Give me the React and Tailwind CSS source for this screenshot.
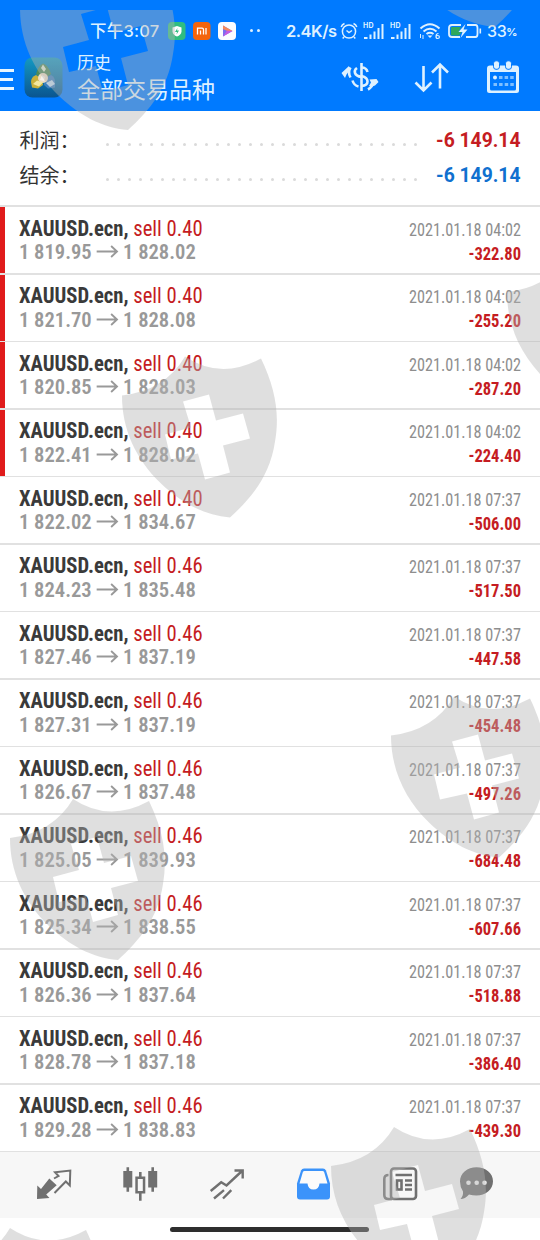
import React from "react";

const deals = [
  { lot: "0.40", open: "1 819.95", close: "1 828.02", time: "2021.01.18 04:02", profit: "-322.80", stop: true },
  { lot: "0.40", open: "1 821.70", close: "1 828.08", time: "2021.01.18 04:02", profit: "-255.20", stop: true },
  { lot: "0.40", open: "1 820.85", close: "1 828.03", time: "2021.01.18 04:02", profit: "-287.20", stop: true },
  { lot: "0.40", open: "1 822.41", close: "1 828.02", time: "2021.01.18 04:02", profit: "-224.40", stop: true },
  { lot: "0.40", open: "1 822.02", close: "1 834.67", time: "2021.01.18 07:37", profit: "-506.00" },
  { lot: "0.46", open: "1 824.23", close: "1 835.48", time: "2021.01.18 07:37", profit: "-517.50" },
  { lot: "0.46", open: "1 827.46", close: "1 837.19", time: "2021.01.18 07:37", profit: "-447.58" },
  { lot: "0.46", open: "1 827.31", close: "1 837.19", time: "2021.01.18 07:37", profit: "-454.48" },
  { lot: "0.46", open: "1 826.67", close: "1 837.48", time: "2021.01.18 07:37", profit: "-497.26" },
  { lot: "0.46", open: "1 825.05", close: "1 839.93", time: "2021.01.18 07:37", profit: "-684.48" },
  { lot: "0.46", open: "1 825.34", close: "1 838.55", time: "2021.01.18 07:37", profit: "-607.66" },
  { lot: "0.46", open: "1 826.36", close: "1 837.64", time: "2021.01.18 07:37", profit: "-518.88" },
  { lot: "0.46", open: "1 828.78", close: "1 837.18", time: "2021.01.18 07:37", profit: "-386.40" },
  { lot: "0.46", open: "1 829.28", close: "1 838.83", time: "2021.01.18 07:37", profit: "-439.30" },
];

const Signal = () => (
  <div className="relative h-[18px] w-[22px]">
    <span className="absolute top-0 left-0 text-[7px] leading-[8px] font-bold tracking-wide">HD</span>
    <svg viewBox="0 0 22 18" className="absolute inset-0" stroke="currentColor" strokeWidth="2">
      <path d="M1 16h3.500M7.500 17v-4.500M11.500 17V9.500M15.500 17V6M19.500 17V2" />
    </svg>
  </div>
);

const StatusBar = () => (
  <div className="flex h-[52px] items-center pt-[9px] text-[#def1ff] font-['Inter','Noto_Sans_CJK_SC',sans-serif] text-[16.500px] font-medium whitespace-nowrap">
    <span className="ml-[90px] w-[78px] pt-px tracking-[0.2px]">下午3:07</span>
    <svg width="18" height="18" viewBox="0 0 18 18">
      <rect width="17.500" height="18" rx="4" fill="#2fbd80" />
      <path d="M9 4l4.500 1.500v4c0 2.500-2 4-4.500 5-2.500-1-4.500-2.500-4.500-5v-4z" fill="#fff" />
      <path d="M9.500 6l-2.500 4h2l-.5 2.500 2.500-4H9z" fill="#2fbd80" />
    </svg>
    <svg className="ml-[7px]" width="18" height="18" viewBox="0 0 18 18">
      <rect width="17.500" height="18" rx="4" fill="#f4640c" />
      <path d="M4.500 12.500V6.200H9q1.500 0 1.500 1.500v4.800M7.500 8.500v4M13 6v6.500" fill="none" stroke="#fff" strokeWidth="1.300" />
    </svg>
    <svg className="ml-[7px]" width="18" height="18" viewBox="0 0 18 18">
      <rect width="18" height="18" rx="4" fill="#fafcff" />
      <path d="M5 3.500v11L14.500 9z" fill="#7b6cf0" />
      <path d="M5 3.500l9.500 5.500-4 .500L5 7z" fill="#f58a5a" />
      <path d="M5 14.500L14.500 9 9 8.500z" fill="#c45be0" />
    </svg>
    <div className="ml-[14px] flex w-[36px] gap-[4px]">
      <i className="size-[3px] rounded-full bg-[#def1ff]" />
      <i className="size-[3px] rounded-full bg-[#def1ff]" />
    </div>
    <span className="w-[54px] pt-px font-semibold tracking-[-0.5px]">2.4K/s</span>
    <svg width="18" height="18" viewBox="0 0 18 18" fill="none" stroke="currentColor" strokeWidth="1.500">
      <circle cx="9" cy="9.500" r="6.600" />
      <path d="M6.500 8.500L9 10.500l3-2M1.200 5Q2 2.500 4.500 1.500M16.800 5Q16 2.500 13.500 1.500M4 15l-1.300 1.500M14 15l1.300 1.500" />
    </svg>
    <div className="ml-[5px] flex gap-[5px]">
      <Signal />
      <Signal />
    </div>
    <svg className="ml-[7px]" width="22" height="18" viewBox="0 0 22 18" fill="none" stroke="currentColor" strokeWidth="2">
      <path d="M1.500 6.500Q11-2 20.500 6.500M4.500 9.500Q11 4 17.500 9.500M7.500 12Q11 9.500 14.500 12" />
      <path d="M8.500 13.500L11 16l2.500-2.500z" fill="currentColor" stroke="none" />
      <path d="M1.500 12v4M4 13v4" strokeWidth="1" />
      <path d="M19.500 11.500q-2.500 0-2.500 3 0 2 1.700 2t1.700-1.500-1.700-1.500-1.700 1.200" strokeWidth="1.200" />
    </svg>
    <svg className="ml-[7px]" width="34" height="18" viewBox="0 0 34 18" fill="none">
      <path d="M13 3h-9Q1 3 1 6v6q0 3 3 3h8M19 3h8.500q2 0 2 3v6q0 3-2 3H18" stroke="currentColor" strokeWidth="1.800" />
      <path d="M4 5h9l-2.500 5h3L11 13.500H4q-1 0-1-1V6q0-1 1-1z" fill="#2fa85c" />
      <path d="M17.500 2l-7 8h4l-2 6 7-8.500h-4z" fill="currentColor" />
      <path d="M32.300 6.500v5" stroke="currentColor" strokeWidth="1.600" />
    </svg>
    <span className="ml-[5px] pt-px text-[16px] tracking-[-0.4px]">33</span>
    <span className="pt-[4px] text-[11px] font-bold">%</span>
  </div>
);

const AppIcon = () => (
  <svg className="ml-[10px] shrink-0" width="40" height="42" viewBox="0 0 40 42">
    <defs>
      <linearGradient id="app" x1="0" y1="0" x2="0" y2="1">
        <stop offset="0" stopColor="#1499c2" />
        <stop offset="1" stopColor="#0a5590" />
      </linearGradient>
    </defs>
    <rect x=".5" y=".5" width="38" height="40" rx="8" fill="url(#app)" />
    <path d="M12 17Q14 9 19 6.500 25 9 27 17l-4 3h-8z" fill="#4f8a58" />
    <path d="M17 11l2-3.500 3 4.500-2 3z" fill="#dfe9d0" />
    <path d="M7 25q0-5 5-7l6 4 1 6-5 3.500-6-1z" fill="#c9b13c" />
    <path d="M31 25q0-5-4-7l-7 4v6l4 3.500 7-1z" fill="#3f80bd" />
    <circle cx="19" cy="21" r="5" fill="#ecdcc4" />
    <path d="M9 27l6 2.500 4-4-6-2z" fill="#f4e9a0" />
    <path d="M22 26l4 4 5-3-3-4z" fill="#c3dcef" />
    <path d="M18 18l3 2-1 4-4-1z" fill="#f5f1ea" />
  </svg>
);

const Header = () => (
  <header className="h-[111px] bg-[#007aff] text-[#def1ff]">
    <StatusBar />
    <div className="flex h-[59px] items-start">
      <div className="mt-[17px] flex w-[14px] shrink-0 flex-col gap-[6px] *:h-[3px] *:bg-[#e8f6ff]">
        <i />
        <i className="w-[13px]" />
        <i />
      </div>
      <div className="mt-[5px]"><AppIcon /></div>
      <div className="ml-[13px] w-[264px] font-['Noto_Sans_CJK_SC',sans-serif] whitespace-nowrap">
        <div className="text-[17px] leading-[20px]">历史</div>
        <div className="mt-[2px] text-[23px] leading-[28px]">全部交易品种</div>
      </div>
      <svg className="mt-[8px]" width="38" height="34" viewBox="0 0 38 34" fill="none" stroke="currentColor" strokeWidth="2.600">
        <path d="M20.500 3v28" />
        <path d="M26.500 12q-1-4.500-6-4.500M16 8q-3 2-2 5t6.500 4M20.500 16q6 1.500 6 5.500t-6 4.500" />
        <path d="M9.500 7.500q-3 4.500 0 10M11.500 20.500q1.500 5 6 6" />
        <path d="M33 21q-1.500 6-6 8.500" />
        <path d="M.5 13l7.500-7 .5 4.500-3 4-1.500 3.500z" fill="currentColor" stroke="none" />
        <path d="M37.500 22l-2-3-7 .5 1.500 3-2 3.500 3 .500 3-1z" fill="currentColor" stroke="none" />
      </svg>
      <svg className="ml-[35px] mt-[8px]" width="36" height="34" viewBox="0 0 36 34" fill="none" stroke="currentColor" strokeWidth="2.600">
        <path d="M9.500 6v24M1.500 22.500l8 8 8-8M26 28.500v-24M18 12.500l8-8 8 8" />
      </svg>
      <svg className="ml-[36px] mt-[8px]" width="34" height="34" viewBox="0 0 34 34">
        <path d="M4 5.500h26q3 0 3 3v22q0 2.500-2.500 2.500h-27Q1 33 1 30.500v-22q0-3 3-3zM4 12v17q0 1.500 1.500 1.500h23q1.500 0 1.500-1.500V12z" fill="currentColor" fillRule="evenodd" />
        <rect x="7.500" y=".8" width="6" height="8.500" rx="2.500" fill="currentColor" stroke="#007aff" />
        <rect x="19.500" y=".8" width="6" height="8.500" rx="2.500" fill="currentColor" stroke="#007aff" />
        <circle cx="9" cy="17.500" r="2" fill="currentColor" />
        <path d="M13 17.500h15M7.500 24.500H28" stroke="#7fbfff" strokeWidth="3.200" strokeDasharray="3.500 2.100" />
      </svg>
    </div>
  </header>
);

const SummaryRow = ({ label, value, color }) => (
  <div className="flex h-[35px] items-center px-[19.500px]">
    <span className="w-[86px] pb-[2px] font-['Noto_Sans_CJK_SC',sans-serif] text-[20px] leading-none text-[#333]">{label}</span>
    <div className="flex w-[311px] justify-between pt-[7px]">
      {Array.from({ length: 29 }, (_, i) => (
        <i key={i} className="size-[3px] rounded-full bg-[#dadada]" />
      ))}
    </div>
    <span className={`ml-auto origin-right scale-x-[0.965] pb-px font-['Roboto',sans-serif] text-[20px] leading-none font-bold whitespace-nowrap ${color}`}>{value}</span>
  </div>
);

const DealRow = ({ deal, wide }) => (
  <li
    className={`flex justify-between border-[#e1e1e1] pr-[19px] font-['Roboto',sans-serif] font-stretch-condensed whitespace-nowrap ${
      wide ? "h-[68px] border-b-2" : "h-[67px] border-b"
    }`}
  >
    <div className="flex">
      <div className={`h-full w-[5px] ${deal.stop ? "bg-[#e01b1b]" : ""}`} />
      <div className={`ml-[14px] ${wide ? "pt-[10px]" : "pt-[9px]"}`}>
        <div className="origin-left scale-x-[0.939] text-[22px] leading-[24px] text-[#c51c22]">
          <span className="font-bold text-[#3a3a3a]">XAUUSD.ecn,</span> sell {deal.lot}
        </div>
        <div className={`flex origin-left scale-x-[0.98] items-center text-[21px] leading-[24px] font-semibold text-[#999] ${wide ? "-mt-px" : ""}`}>
          {deal.open}
          <svg className="mx-[4.500px]" width="23" height="14" viewBox="0 0 23 14" fill="none" stroke="currentColor" strokeWidth="1.900">
            <path d="M0 6.500h21M15 1l6 5.500-6 5.500" />
          </svg>
          {deal.close}
        </div>
      </div>
    </div>
    <div className={`text-right ${wide ? "pt-[11px]" : "pt-[10px]"}`}>
      <div className="origin-right scale-x-[0.926] text-[17.500px] leading-[24px] text-[#8e8e8e]">{deal.time}</div>
      <div className="origin-right scale-x-[0.945] text-[17.500px] leading-[24px] font-bold text-[#c51c22]">{deal.profit}</div>
    </div>
  </li>
);

const TabBar = () => (
  <nav className="flex h-[66px] bg-[#f7f7f7] pl-[36px] pt-[14px] text-[#707070] *:size-[36px] *:shrink-0">
    <svg viewBox="0 0 36 36">
      <path d="M1 33l.3-13.500L5 23l8.300-10.500 7.400 6.800-10.500 9.200 3.300 3.500z" fill="currentColor" />
      <path d="M18 12.500L22.500 10l-3.500-3.800 15.300-1.700-.5 15-4-4L18.500 27" fill="none" stroke="currentColor" strokeWidth="2" />
    </svg>
    <svg className="ml-[50px]" viewBox="0 0 36 36" fill="currentColor">
      <path d="M4.500 1.300h2.600V5h3.200v16.500H7.100v4.200H4.500v-4.200H1.300V5h3.200zM29.400 1.300H32V5h3.200v16.500H32v4.200h-2.600v-4.200h-3.200V5h3.200z" />
      <path d="M17 6h2.600v4.500h3.700v17h-3.700v7.200H17v-7.200h-3.700v-17H17zM15.800 13v12h5V13z" fillRule="evenodd" />
    </svg>
    <svg className="ml-[51px]" viewBox="0 0 36 36" fill="none" stroke="currentColor" strokeWidth="2.400">
      <path d="M1.700 25l10.500-8.700 5.300 3.200L33 5M25.500 4.500h8.200v8M5 32.500l10-8.300M14 32.500l8.300-8.300" />
    </svg>
    <svg className="ml-[51px]" viewBox="0 0 36 36">
      <path d="M8 2.500h19q2 0 3 2l4 13v13q0 3-3 3H4q-3 0-3-3v-13l4-13q1-2 3-2z" fill="#3b93fa" />
      <path d="M8.500 5h18q1.200 0 1.700 1.300l3.300 11.200h-8q-.5 6-6 6t-6-6h-8L6.800 6.300Q7.300 5 8.500 5z" fill="#fbfbfb" />
    </svg>
    <svg className="ml-[50px]" viewBox="0 0 36 36" fill="none" stroke="currentColor" strokeWidth="2.600">
      <rect x="9" y="2.500" width="25" height="30.500" rx="3" />
      <path d="M6.500 9Q2.300 9 2.300 13v16q0 4 4 4h4M13.500 9H30M23 14.500h7M23 19h7M23 23.500h7" />
      <rect x="15" y="14.500" width="4.500" height="9" />
    </svg>
    <svg className="ml-[40px]" viewBox="0 0 36 36" fill="currentColor">
      <path d="M18.500 1.300C27.500 1.300 35 7 35 15.300S27.500 29.500 18.500 29.500q-4 0-7.500-1-4 4.500-8.500 4.500 3-3.500 2.500-7.500-3-4.500-3-10C2 7 9.500 1.300 18.500 1.300z" />
      <g fill="#f2f2f2">
        <circle cx="10.500" cy="16.700" r="2.300" />
        <circle cx="18.700" cy="16.700" r="2.300" />
        <circle cx="26.500" cy="16.700" r="2.300" />
      </g>
    </svg>
  </nav>
);

const shields = [
  [20, 8],
  [387, -95],
  [507, 292],
  [122, 395.5],
  [391, 735.5],
  [10, 838],
  [331, 1166],
  [-53, 1267],
];

// Shield stamps tiled over the whole screen, below the top 10px
const Watermark = () => (
  <div className="pointer-events-none absolute inset-x-0 top-[10px] bottom-0 overflow-hidden">
    <svg width="540" height="1230" viewBox="0 10 540 1230" fill="#b3b3b3" fillOpacity="0.42">
      {shields.map(([x, y]) => (
        <path
          key={`${x}-${y}`}
          transform={`translate(${x} ${y})`}
          fillRule="evenodd"
          d="M0 0Q43-5 63-39Q99-15 139-37C153-8 158 18 153 46C148 80 130 102 108 122C82 120 59 107 39 88C13 63 0 33 0 0ZM61 6L87-1L94 25L121 18L128 43L101 50L108 77L83 84L76 58L49 64L43 39L69 32Z"
        />
      ))}
    </svg>
  </div>
);

export default function App() {
  return (
    <div className="relative h-[1240px] w-[540px] overflow-hidden bg-white">
      <Header />
      <section className="h-[96px] border-b-2 border-[#e1e1e1] pt-[12px]">
        <SummaryRow label="利润：" value="-6 149.14" color="text-[#c51c22]" />
        <SummaryRow label="结余：" value="-6 149.14" color="text-[#1070cf]" />
      </section>
      <ul>
        {deals.map((deal, i) => (
          <DealRow key={i} deal={deal} wide={i % 2 === 0} />
        ))}
      </ul>
      <TabBar />
      <div className="ml-[170px] mt-[9px] h-[5px] w-[199px] rounded-full bg-[#2e2e2e]" />
      <Watermark />
    </div>
  );
}
